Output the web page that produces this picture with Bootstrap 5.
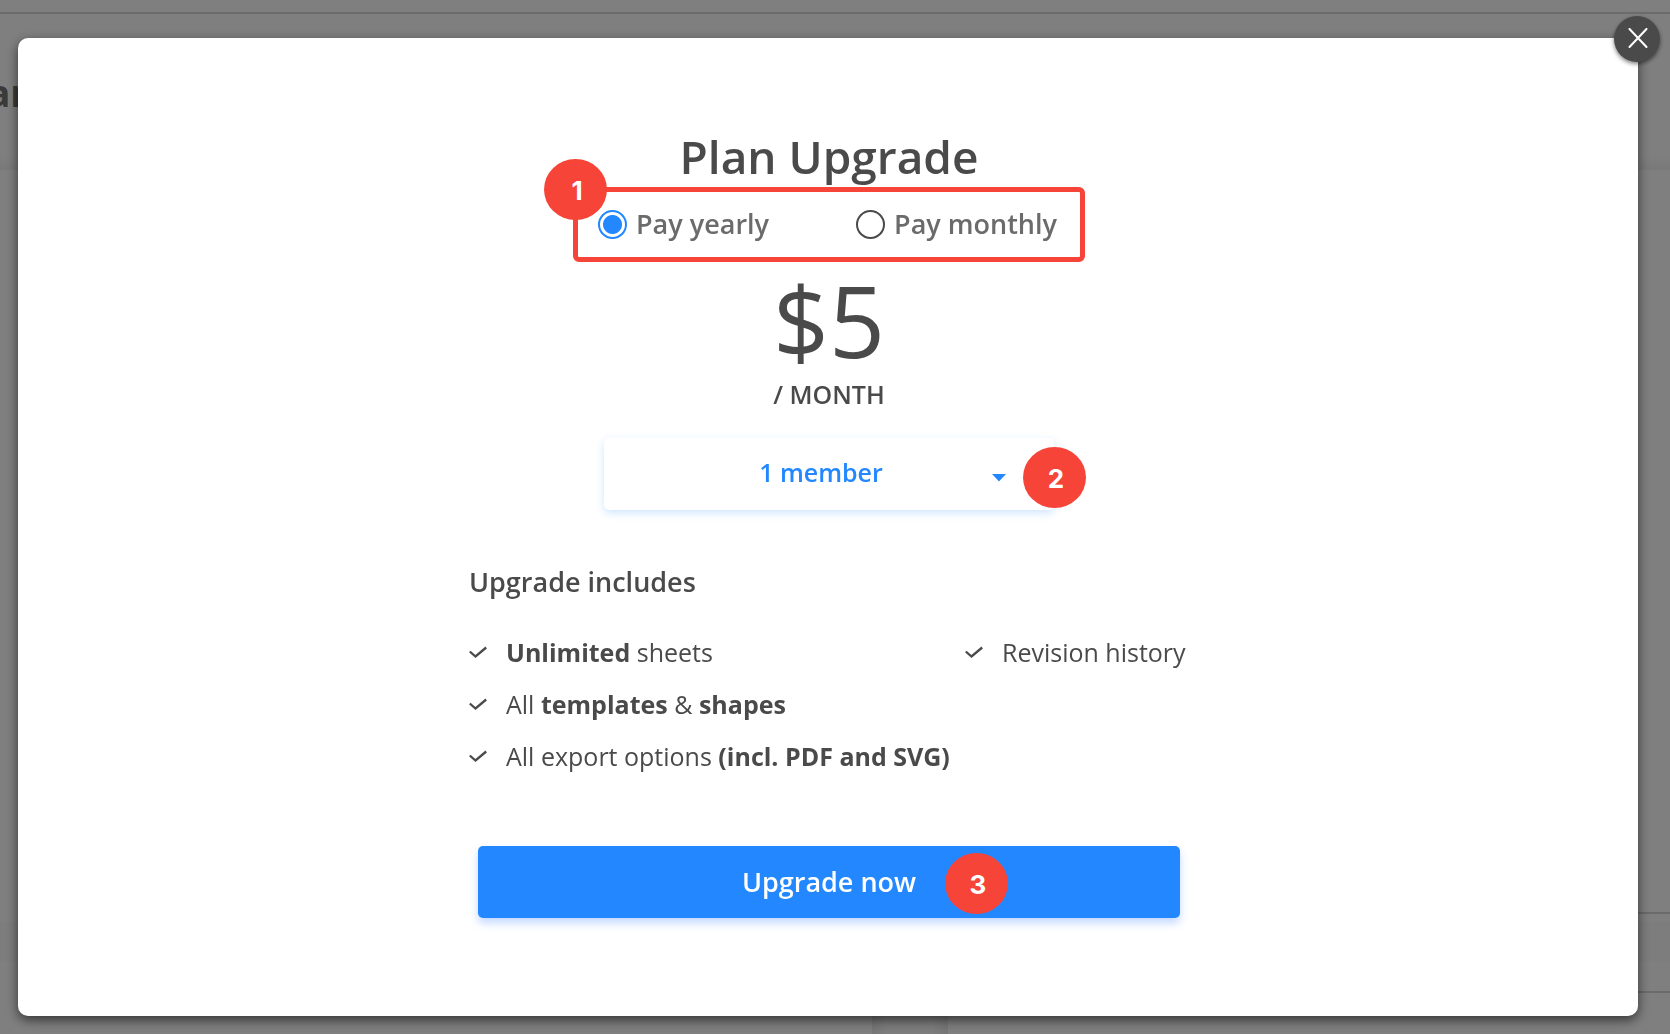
<!DOCTYPE html>
<html lang="en">
<head>
<meta charset="utf-8">
<meta name="viewport" content="width=device-width, initial-scale=1">
<title>Plan Upgrade</title>
<link href="https://cdn.jsdelivr.net/npm/bootstrap@5.3.0/dist/css/bootstrap.min.css" rel="stylesheet">
<style>
  :root { --ink: #4a4a4a; --blue: #2388ff; --red: #f64438; }
  body { font-family: "Open Sans", "Noto Sans", sans-serif; color: var(--ink); overflow: hidden; }

  /* dimmed page behind the dialog */
  .page-back { min-height: 100vh; }
  .page-bar { height: 14px; border-bottom: 2px solid #d6d6d6; }
  .page-head { height: 156px; padding-top: 54px; background: linear-gradient(#fff 90%, #f2f2f2); }
  .page-title { font-size: 37px; line-height: 50px; color: #757575; margin-left: -12px; }
  .page-panel { height: 744px; }
  .page-panel > div { width: 160px; border-bottom: 2px solid #d6d6d6; }
  .page-band { height: 47px; padding-top: 7px; }
  .page-band > div { height: 40px; background: #fafafa; }
  .page-rule { height: 32px; }
  .page-rule > div { width: 160px; border-bottom: 2px solid #d6d6d6; }
  .page-foot { padding-left: 872px; }
  .page-foot > div { width: 76px; background: linear-gradient(90deg, #ececec, #fafafa 20%, #fafafa 80%, #ececec); }

  .modal-backdrop.show { opacity: .5; }
  .upgrade-dialog { max-width: none; margin: 38px 32px 18px 18px; }
  .upgrade-content { min-height: calc(100vh - 56px); padding: 88px 24px 24px 26px; border: 0; border-radius: 10px; box-shadow: 0 4px 12px rgba(0,0,0,.6); color: var(--ink); }
  .close-round { top: -22px; right: -22px; width: 46px; height: 46px; padding: 0 0 2px 2px; background: #4a4a4a; border: 0; box-shadow: 0 2px 4px rgba(0,0,0,.5); }

  .plan-title { font-size: 46px; line-height: 60px; margin: 0 0 1px; }
  .pay-choice { width: 512px; height: 75px; padding: 0 23px 1px 20px; border: 5px solid var(--red); border-radius: 6px; }
  .pay-option { font-size: 27px; line-height: 36px; color: #6b6b6b; gap: 9px; }
  .pay-option .form-check-input { width: 29px; height: 29px; margin: 0; border: 2px solid var(--ink); }
  .pay-option .form-check-input:checked[type=radio] { border-color: var(--blue); background: #fff radial-gradient(circle, var(--blue) 9px, #fff 10px) center / 100% 100% no-repeat; }

  .plan-price { font-size: 98px; line-height: 96px; margin-top: 10px; }
  .plan-period { font-size: 25px; line-height: 36px; margin-top: 8px; }
  .member-box { width: 450px; margin-top: 26px; }
  .member-box select { height: 72px; padding: 0 16px 3px 0; border: 0; border-radius: 5px; background: #fff; color: var(--blue); font-size: 25px; font-weight: 600; appearance: none; text-align: center; text-align-last: center; box-shadow: 0 3px 9px rgba(35,136,255,.22); }
  .member-caret { right: 48px; top: 36px; }

  .includes { width: 720px; margin-top: 52px; }
  .includes h2 { font-size: 27px; line-height: 40px; margin-bottom: 24px; }
  .includes li { font-size: 25px; line-height: 52px; gap: 19px; }
  .includes-main { flex: 0 0 496px; }
  .upgrade-wrap { width: 702px; margin-top: 64px; }
  .upgrade-wrap .btn { height: 72px; background: var(--blue); color: #fff; border: 0; border-radius: 5px; font-size: 27px; box-shadow: 0 5px 9px rgba(35,110,255,.27); }

  .step-dot { width: 63px; height: 61px; padding: 3px 0 0 3px; background: var(--red); color: #fff; font-family: Inter, Arial, sans-serif; font-size: 26px; line-height: 32px; font-weight: 700; pointer-events: none; }
  .step-one { left: -34px; top: -33px; }
  .step-two { right: -32px; top: 9px; }
  .step-three { right: 172px; top: 7px; }
</style>
</head>
<body>
<div class="page-back d-flex flex-column" aria-hidden="true">
  <div class="page-bar"></div>
  <div class="page-head"><div class="page-title fw-bold">an</div></div>
  <div class="page-panel d-flex justify-content-end"><div></div></div>
  <div class="page-band"><div></div></div>
  <div class="page-rule d-flex justify-content-end"><div></div></div>
  <div class="page-foot flex-grow-1 d-flex"><div></div></div>
</div>
<div class="modal-backdrop show"></div>

<div class="modal d-block" role="dialog" aria-modal="true" aria-labelledby="planTitle">
  <div class="modal-dialog upgrade-dialog">
    <form class="modal-content upgrade-content align-items-center">
      <button type="button" class="close-round position-absolute rounded-circle d-flex align-items-center justify-content-center" aria-label="Close">
        <svg width="20" height="20" viewBox="0 0 20 20" fill="none" stroke="#fff" stroke-width="2" stroke-linecap="round"><path d="M1.500 1l17 18M18.500 1L1.500 19"/></svg>
      </button>

      <h1 class="plan-title fw-semibold" id="planTitle">Plan Upgrade</h1>

      <div class="pay-choice position-relative d-flex align-items-center justify-content-between">
        <label class="pay-option d-flex align-items-center fw-semibold"><input class="form-check-input" type="radio" name="billing" checked>Pay yearly</label>
        <label class="pay-option d-flex align-items-center fw-semibold"><input class="form-check-input" type="radio" name="billing">Pay monthly</label>
        <span class="step-dot step-one position-absolute rounded-circle d-flex align-items-center justify-content-center">1</span>
      </div>

      <div class="plan-price">$5</div>
      <div class="plan-period fw-semibold">/ MONTH</div>

      <div class="member-box position-relative">
        <select class="w-100 d-block" aria-label="Number of members"><option>1 member</option></select>
        <svg class="member-caret position-absolute pe-none" width="14" height="8" viewBox="0 0 14 8" fill="#2388ff"><path d="M0 0h14L7 7.500z"/></svg>
        <span class="step-dot step-two position-absolute rounded-circle d-flex align-items-center justify-content-center">2</span>
      </div>

      <section class="includes">
        <h2 class="fw-semibold">Upgrade includes</h2>
        <div class="d-flex">
          <ul class="includes-main list-unstyled m-0">
            <li class="d-flex align-items-center"><svg width="18" height="12" viewBox="0 0 18 12" fill="none" stroke="#4a4a4a" stroke-width="2.300"><path d="M.8 5.500l5.700 5L17.200 1.500"/></svg><span><b>Unlimited</b> sheets</span></li>
            <li class="d-flex align-items-center"><svg width="18" height="12" viewBox="0 0 18 12" fill="none" stroke="#4a4a4a" stroke-width="2.300"><path d="M.8 5.500l5.700 5L17.200 1.500"/></svg><span>All <b>templates</b> &amp; <b>shapes</b></span></li>
            <li class="d-flex align-items-center"><svg width="18" height="12" viewBox="0 0 18 12" fill="none" stroke="#4a4a4a" stroke-width="2.300"><path d="M.8 5.500l5.700 5L17.200 1.500"/></svg><span>All export options <b>(incl. PDF and SVG)</b></span></li>
          </ul>
          <ul class="list-unstyled m-0">
            <li class="d-flex align-items-center"><svg width="18" height="12" viewBox="0 0 18 12" fill="none" stroke="#4a4a4a" stroke-width="2.300"><path d="M.8 5.500l5.700 5L17.200 1.500"/></svg><span>Revision history</span></li>
          </ul>
        </div>
      </section>

      <div class="upgrade-wrap position-relative">
        <button type="submit" class="btn w-100 fw-semibold">Upgrade now</button>
        <span class="step-dot step-three position-absolute rounded-circle d-flex align-items-center justify-content-center">3</span>
      </div>
    </form>
  </div>
</div>
<script src="https://cdn.jsdelivr.net/npm/bootstrap@5.3.0/dist/js/bootstrap.bundle.min.js"></script>
</body>
</html>
